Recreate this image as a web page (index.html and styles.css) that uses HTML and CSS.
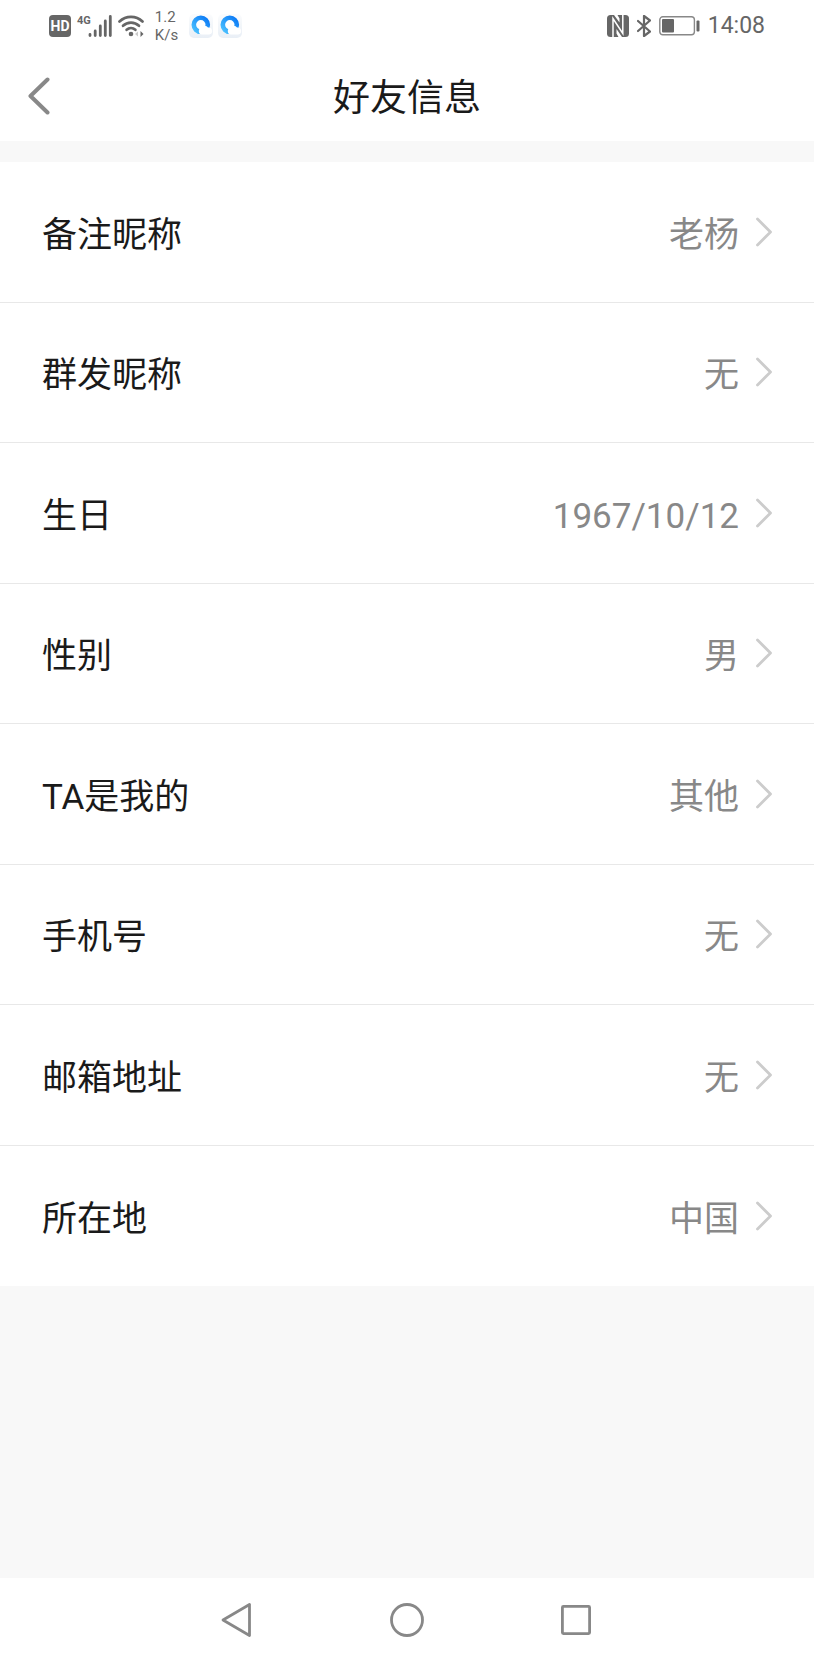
FILE: index.html
```html
<!DOCTYPE html>
<html lang="zh-CN">
<head>
<meta charset="utf-8">
<meta name="viewport" content="width=device-width, initial-scale=1">
<title>好友信息</title>
<link rel="stylesheet" href="styles.css">
</head>
<body>
<svg class="defs" width="0" height="0" aria-hidden="true">
  <defs>
    <linearGradient id="ring" x1="0" y1="1" x2="1" y2="0">
      <stop offset="0" stop-color="#4cc2ff"/>
      <stop offset="1" stop-color="#0a78f5"/>
    </linearGradient>
    <linearGradient id="tile" x1="0" y1="0" x2="0" y2="1">
      <stop offset="0" stop-color="#fbfcfd"/>
      <stop offset="1" stop-color="#e9eff6"/>
    </linearGradient>
    <symbol id="chevron" viewBox="0 0 16 30">
      <path d="M1.500 2 14.500 15 1.500 28" fill="none" stroke="currentColor" stroke-width="2.800" stroke-linecap="round" stroke-linejoin="round"/>
    </symbol>
    <symbol id="browser" viewBox="0 0 24 24">
      <rect width="24" height="24" rx="5" fill="url(#tile)"/>
      <circle cx="11.800" cy="10.800" r="7" fill="#fff" stroke="url(#ring)" stroke-width="4.600"/>
      <path d="M13 20.500a3.400 3.400 0 0 1-.6-6.700 3.800 3.800 0 0 1 6.600-.2 3.500 3.500 0 0 1 1.200 6.900z" fill="#fff"/>
    </symbol>
  </defs>
</svg>

<header class="header">
  <div class="status">
    <div class="status-left">
      <span class="hd">HD</span>
      <span class="signal">
        <span class="network">4G</span>
        <svg class="bars" width="24" height="22" viewBox="0 0 24 22" aria-hidden="true">
          <g stroke="#666" stroke-width="2.800" stroke-linecap="round">
            <path d="M2 19.500v1M7.200 16v4.500M12.300 11v9.500M17.300 6v14.500M22.300 1.500v19"/>
          </g>
        </svg>
      </span>
      <svg class="wifi" width="26" height="22" viewBox="0 0 26 22" aria-hidden="true">
        <g fill="none" stroke="#666" stroke-width="2.700" stroke-linecap="round">
          <path d="M1.500 6.500C8 .2 18 .2 24.500 6.500"/>
          <path d="M5 10.800c4.500-4.300 11.500-4.300 16 0"/>
          <path d="M8.600 14.800c2.600-2.300 6.200-2.300 8.800 0"/>
        </g>
        <circle cx="13" cy="19" r="2.300" fill="#666"/>
        <path d="M20 16.500v5l-3-2.500z" fill="#ccc"/>
        <path d="M22.500 16v6l3-3z" fill="#666"/>
      </svg>
      <span class="speed">1.2<br>K/s</span>
      <span class="apps">
        <svg width="24" height="24" aria-hidden="true"><use href="#browser"/></svg>
        <svg width="24" height="24" aria-hidden="true"><use href="#browser"/></svg>
      </span>
    </div>
    <div class="status-right">
      <svg width="22" height="22" viewBox="0 0 22 22" aria-hidden="true">
        <rect width="22" height="22" rx="3.500" fill="#666"/>
        <path d="M6 22V3.500L15.800 18.500V0" fill="none" stroke="#fff" stroke-width="1.500"/>
        <path d="M7 0l5.500 7.500V3.500L10.500 0zM15 22 9.500 14v4.500l2 3.500z" fill="#fff"/>
      </svg>
      <svg width="14" height="22" viewBox="0 0 14 22" aria-hidden="true">
        <path d="M1 6l12 10.500-6 4.500V1l6 4.500L1 16" fill="none" stroke="#666" stroke-width="2.200" stroke-linejoin="round" stroke-linecap="round"/>
      </svg>
      <svg class="battery" width="41" height="20" viewBox="0 0 41 20" aria-hidden="true">
        <rect x=".8" y=".8" width="34.600" height="18" rx="3" fill="none" stroke="#888" stroke-width="1.400"/>
        <rect x="3" y="3" width="12" height="13.600" rx="1" fill="#666"/>
        <rect x="37.500" y="4.500" width="3" height="11" rx="1" fill="#666"/>
      </svg>
      <time class="clock">14:08</time>
    </div>
  </div>
  <div class="titlebar">
    <button class="back" type="button" aria-label="返回">
      <svg width="22" height="38" viewBox="0 0 22 38" aria-hidden="true">
        <path d="M19.500 2.500 2.500 19 19.500 35.500" fill="none" stroke="#888" stroke-width="4" stroke-linecap="round" stroke-linejoin="round"/>
      </svg>
    </button>
    <h1 class="title">好友信息</h1>
  </div>
</header>

<main class="content">
  <div class="list">
    <button class="row" type="button"><span class="label">备注昵称</span><span class="value">老杨</span><svg class="arrow" aria-hidden="true"><use href="#chevron"/></svg></button>
    <button class="row" type="button"><span class="label">群发昵称</span><span class="value">无</span><svg class="arrow" aria-hidden="true"><use href="#chevron"/></svg></button>
    <button class="row" type="button"><span class="label">生日</span><span class="value">1967/10/12</span><svg class="arrow" aria-hidden="true"><use href="#chevron"/></svg></button>
    <button class="row" type="button"><span class="label">性别</span><span class="value">男</span><svg class="arrow" aria-hidden="true"><use href="#chevron"/></svg></button>
    <button class="row" type="button"><span class="label">TA是我的</span><span class="value">其他</span><svg class="arrow" aria-hidden="true"><use href="#chevron"/></svg></button>
    <button class="row" type="button"><span class="label">手机号</span><span class="value">无</span><svg class="arrow" aria-hidden="true"><use href="#chevron"/></svg></button>
    <button class="row" type="button"><span class="label">邮箱地址</span><span class="value">无</span><svg class="arrow" aria-hidden="true"><use href="#chevron"/></svg></button>
    <button class="row" type="button"><span class="label">所在地</span><span class="value">中国</span><svg class="arrow" aria-hidden="true"><use href="#chevron"/></svg></button>
  </div>
</main>

<nav class="navbar">
  <button class="nav-button" type="button" aria-label="返回">
    <svg width="34" height="36" viewBox="0 0 34 36" aria-hidden="true">
      <path d="M28.500 2.500v31L2 18z" fill="none" stroke="#888" stroke-width="2.800" stroke-linejoin="round"/>
    </svg>
  </button>
  <button class="nav-button" type="button" aria-label="主屏幕">
    <svg width="34" height="36" viewBox="0 0 34 36" aria-hidden="true">
      <circle cx="17" cy="18" r="15.500" fill="none" stroke="#888" stroke-width="2.800"/>
    </svg>
  </button>
  <button class="nav-button" type="button" aria-label="最近任务">
    <svg width="34" height="36" viewBox="0 0 34 36" aria-hidden="true">
      <rect x="3.400" y="4.400" width="27.200" height="27.200" rx="1" fill="none" stroke="#888" stroke-width="2.800"/>
    </svg>
  </button>
</nav>
</body>
</html>
```
FILE: styles.css
```css
* {
  box-sizing: border-box;
}

body {
  display: flex;
  flex-direction: column;
  min-height: 100vh;
  margin: 0;
  background: #f8f8f8;
  color: #1a1a1a;
  font-family: Roboto, "Noto Sans CJK SC", sans-serif;
}

button {
  margin: 0;
  padding: 0;
  border: 0;
  background: none;
  color: inherit;
  font: inherit;
}

svg {
  display: block;
  flex: none;
}

.defs {
  position: absolute;
}

.header {
  background: #fff;
}

.status {
  display: flex;
  justify-content: space-between;
  align-items: center;
  height: 51px;
  padding: 0 49px;
  color: #666;
}

.status-left,
.status-right {
  display: flex;
  align-items: center;
}

.status-left {
  gap: 6px;
}

.status-right {
  gap: 8px;
}

.hd {
  width: 22px;
  border-radius: 4px;
  background: #666;
  color: #fff;
  font-size: 14px;
  font-weight: 700;
  line-height: 22px;
  text-align: center;
}

.signal {
  display: flex;
  align-items: flex-start;
}

.network {
  font-size: 11px;
  font-weight: 700;
  line-height: 11px;
}

.bars {
  margin-left: -3px;
}

.speed {
  margin-left: 5px;
  font-size: 15px;
  line-height: 18px;
}

.apps {
  display: flex;
  gap: 5px;
  margin-left: 5px;
}

.clock {
  font-size: 23px;
  line-height: 28px;
}

.titlebar {
  display: grid;
  grid-template-columns: 80px 1fr 80px;
  align-items: center;
  padding: 14px 0;
}

.back {
  padding-left: 28px;
}

.title {
  margin: 0;
  padding-top: 6px;
  font-size: 37px;
  font-weight: 400;
  line-height: 56px;
  text-align: center;
}

.content {
  flex: 1;
  padding: 21px 0;
}

.list {
  display: grid;
  grid-auto-rows: 1fr;
  min-height: 1124px;
  background: #fff;
}

.row {
  display: flex;
  align-items: center;
  padding: 0 42px;
  border-bottom: 1px solid #e8e8e8;
  font-size: 35px;
  line-height: 52px;
  text-align: left;
}

.row:last-child {
  border-bottom: 0;
}

.label,
.value {
  padding-top: 8px;
}

.label {
  flex: 1;
}

.value {
  color: #888;
}

.arrow {
  width: 16px;
  height: 30px;
  margin-left: 17px;
  color: #ccc;
}

.navbar {
  display: flex;
  justify-content: center;
  gap: 135px;
  padding: 24px 0;
  background: #fff;
}
```
